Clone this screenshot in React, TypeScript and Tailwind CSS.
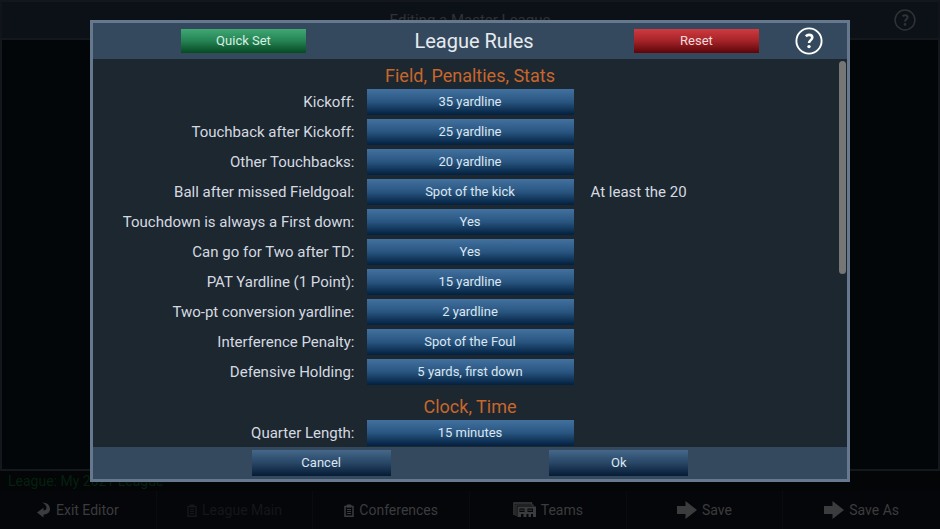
import type { ReactNode } from "react";

type Rule = { id: string; label: string; value: string; note?: string };
type Section = { title: string; rules: Rule[] };

const sections: Section[] = [
  {
    title: "Field, Penalties, Stats",
    rules: [
      { id: "kickoff", label: "Kickoff:", value: "35 yardline" },
      { id: "touchback-kickoff", label: "Touchback after Kickoff:", value: "25 yardline" },
      { id: "touchback-other", label: "Other Touchbacks:", value: "20 yardline" },
      { id: "missed-fieldgoal", label: "Ball after missed Fieldgoal:", value: "Spot of the kick", note: "At least the 20" },
      { id: "touchdown-first", label: "Touchdown is always a First down:", value: "Yes" },
      { id: "go-for-two", label: "Can go for Two after TD:", value: "Yes" },
      { id: "pat-yardline", label: "PAT Yardline (1 Point):", value: "15 yardline" },
      { id: "two-pt", label: "Two-pt conversion yardline:", value: "2 yardline" },
      { id: "interference", label: "Interference Penalty:", value: "Spot of the Foul" },
      { id: "holding", label: "Defensive Holding:", value: "5 yards, first down" },
    ],
  },
  {
    title: "Clock, Time",
    rules: [{ id: "quarter", label: "Quarter Length:", value: "15 minutes" }],
  },
];

function HelpIcon({ className }: { className: string }) {
  return (
    <svg viewBox="0 0 28 28" fill="none" stroke="currentColor" className={className} aria-hidden="true">
      <circle cx="14" cy="14" r="12.6" strokeWidth="1.9" />
      <path d="M10.8 9.2c1-.9 2-1.3 3.2-1.3 2 0 3.3 1 3.3 2.7 0 2.4-3.3 2.7-3.3 5.4" strokeWidth="2.6" />
      <circle cx="14" cy="19.6" r="1.7" fill="currentColor" stroke="none" />
    </svg>
  );
}

function ReturnIcon() {
  return (
    <svg viewBox="0 0 14 16" fill="currentColor" className="h-4 w-3.5" aria-hidden="true">
      <path d="M5 0.5C10 0.5 13 3.3 13 7c0 3.300-2.600 5.300-6.500 5.600V15.500L0 10.500 6.500 5.800v2.800C8.600 8.400 9.600 7.400 9.500 5.600 9.400 3.500 7.600 1.700 5 0.500z" />
    </svg>
  );
}

function ClipboardIcon() {
  return (
    <svg viewBox="0 0 10 13" fill="none" stroke="currentColor" className="h-[13px] w-2.5" aria-hidden="true">
      <path d="M1 2.500h8v9.800H1z" strokeWidth="1.500" />
      <path d="M3 1h4v2H3z" fill="currentColor" />
      <path d="M3 5.500h4M3 7.500h4M3 9.500h4" />
    </svg>
  );
}

function TeamsIcon() {
  return (
    <svg viewBox="0 0 23 16" fill="none" stroke="currentColor" className="h-4 w-[23px]" aria-hidden="true">
      <path d="M1 13V1h17.500v1.500" strokeWidth="1.400" />
      <path d="M3 14V3h17v1.500" strokeWidth="1.200" />
      <path fill="currentColor" stroke="none" fillRule="evenodd" d="M4.500 4.500h18.500V15h-3v-3h-2v3h-2.500v-3h-2v3h-3v-3H8v3H4.500zM6.500 6.500v3.500h5V6.500zM14.500 6.500v3.500h5.500V6.500z" />
      <path d="M7 8.200h4M15.200 8.200h4" />
    </svg>
  );
}

function ArrowIcon() {
  return (
    <svg viewBox="0 0 20 18" fill="currentColor" className="h-[18px] w-5" aria-hidden="true">
      <path d="M0 5h8.500V0L20 9 8.500 18v-5H0z" />
    </svg>
  );
}

const navItems: { label: string; icon: ReactNode; disabled?: boolean }[] = [
  { label: "Exit Editor", icon: <ReturnIcon /> },
  { label: "League Main", icon: <ClipboardIcon />, disabled: true },
  { label: "Conferences", icon: <ClipboardIcon /> },
  { label: "Teams", icon: <TeamsIcon /> },
  { label: "Save", icon: <ArrowIcon /> },
  { label: "Save As", icon: <ArrowIcon /> },
];

function EditorScreen() {
  return (
    <div className="flex h-full flex-col border-t-2 border-[#14161d]">
      <header className="grid h-9 shrink-0 grid-cols-[1fr_auto_1fr] items-center border-x-2 border-[#11141a] bg-[#0c1017] px-[22px] text-[#303236]">
        <h1 className="col-start-2 text-[15px]">Editing a Master League</h1>
        <button type="button" aria-label="Editor help" className="justify-self-end">
          <HelpIcon className="size-[22px]" />
        </button>
      </header>
      <main className="flex-1 border-2 border-[#14171b] bg-[#030608]" />
      <p className="h-5 shrink-0 truncate px-2 text-sm text-[#04210f]">League: My 2021 League</p>
      <nav className="grid h-[38px] shrink-0 grid-cols-6 divide-x divide-[#090b0e] bg-[#050609]">
        {navItems.map((item) => (
          <button
            key={item.label}
            type="button"
            disabled={item.disabled}
            className="flex items-center justify-center gap-[5px] text-sm text-[#3b3c3e] disabled:text-[#141619]"
          >
            {item.icon}
            {item.label}
          </button>
        ))}
      </nav>
    </div>
  );
}

function RuleRow({ rule }: { rule: Rule }) {
  return (
    <div className="grid grid-cols-[1fr_207px_1fr] items-center">
      <label htmlFor={rule.id} className="pr-3 text-right text-[15px] text-[#d5dae0]">
        {rule.label}
      </label>
      <button
        id={rule.id}
        type="button"
        className="h-[26px] bg-linear-to-b from-[#43719f] via-[#285580] to-[#04203f] text-[13px] text-[#dce6f0]"
      >
        {rule.value}
      </button>
      {rule.note && <span className="pl-[17px] text-[15px] text-[#d5dae0]">{rule.note}</span>}
    </div>
  );
}

function RulesDialog() {
  return (
    <div
      role="dialog"
      aria-labelledby="rules-title"
      className="flex h-full flex-col border-3 border-[#66788e] bg-[#1d2730]"
    >
      <header className="flex h-9 shrink-0 items-center bg-[#35495e] pr-6 pl-[88px]">
        <button type="button" className="h-6 w-[125px] bg-linear-to-b from-[#3fa873] via-[#248353] to-[#064a22] text-[13px] text-[#d8efe2]">
          Quick Set
        </button>
        <h2 id="rules-title" className="flex-1 pl-2 text-center text-xl text-[#e6ebf0]">
          League Rules
        </h2>
        <button type="button" className="h-6 w-[125px] bg-linear-to-b from-[#d03a40] via-[#a42328] to-[#5d0508] text-[13px] text-[#f3dcdc]">
          Reset
        </button>
        <button type="button" aria-label="Rules help" className="ml-9 text-white">
          <HelpIcon className="size-7" />
        </button>
      </header>

      <div className="relative min-h-0 flex-1 overflow-hidden pt-1">
        <div className="flex flex-col gap-[9px]">
          {sections.map((section) => (
            <section key={section.title}>
              <h3 className="text-center text-lg leading-[26px] text-[#c8662c]">{section.title}</h3>
              <div className="flex flex-col gap-1">
                {section.rules.map((rule) => (
                  <RuleRow key={rule.id} rule={rule} />
                ))}
              </div>
            </section>
          ))}
        </div>
        <div className="absolute top-0.5 right-px h-[55%] w-[7px] rounded-full bg-[#767676]" />
      </div>

      <footer className="flex h-8 shrink-0 items-center justify-evenly bg-[#35495e]">
        {["Cancel", "Ok"].map((label) => (
          <button
            key={label}
            type="button"
            className="h-[26px] w-[139px] bg-linear-to-b from-[#45688a] via-[#284666] to-[#061c35] text-[13px] text-[#dce6f0]"
          >
            {label}
          </button>
        ))}
      </footer>
    </div>
  );
}

export default function App() {
  return (
    <div className="h-screen overflow-hidden bg-[#030507] font-[Roboto,sans-serif]">
      <EditorScreen />
      <div className="fixed inset-0 px-[90px] pt-5 pb-[47px]">
        <RulesDialog />
      </div>
    </div>
  );
}
